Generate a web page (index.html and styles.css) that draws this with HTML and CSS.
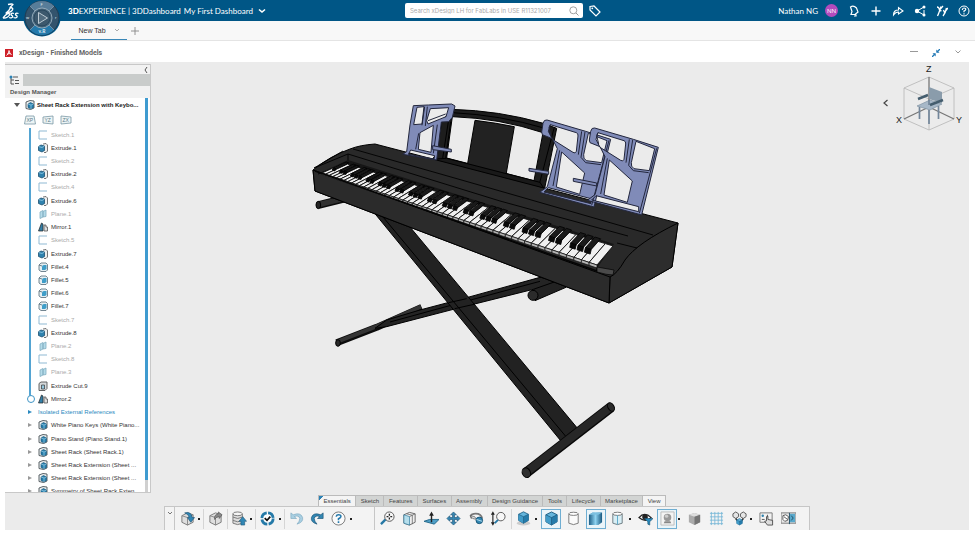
FILE: index.html
```html
<!DOCTYPE html>
<html lang="en">
<head>
<meta charset="utf-8">
<title>xDesign - Finished Models</title>
<link rel="stylesheet" href="styles.css">
</head>
<body>
<svg class="defs" aria-hidden="true">
  <defs>
    <linearGradient id="shade" x1="0" y1="0" x2="1" y2="0"><stop offset="0" stop-color="#1d5e86"/><stop offset=".5" stop-color="#8ed2f0"/><stop offset="1" stop-color="#17577e"/></linearGradient>
    <symbol id="sketch" viewBox="0 0 10 10"><path d="M9 1H1v8h8" fill="none" stroke="#8fb9d3"/></symbol>
    <symbol id="extrude" viewBox="0 0 10 10"><path d="M5 1l3-.5L9.500 2v6L8 9.500H6" fill="#eee" stroke="#555" stroke-width=".8"/><path d="M.5 3.500L3 2l3.500 1v4.500L4 9 .5 7.500z" fill="#2f82ae" stroke="#1c4f70" stroke-width=".8"/><path d="M.5 3.500L4 4.500 6.500 3" fill="none" stroke="#a5d6ed" stroke-width=".7"/></symbol>
    <symbol id="plane" viewBox="0 0 10 10"><path d="M2 3l3-1.500V8L2 9.500zM5 2.500L8 1v6.500L5 8z" fill="#b4dbe9" stroke="#83aec2" stroke-width=".8"/></symbol>
    <symbol id="mirror" viewBox="0 0 10 10"><path d="M3.500 1L5 2v7H.5z" fill="#347fa7" stroke="#222" stroke-width=".7"/><path d="M6 3h2v2h1.500v4H6z" fill="#ddd" stroke="#555" stroke-width=".8"/></symbol>
    <symbol id="fillet" viewBox="0 0 10 10"><path d="M1 3l2-2h5l1.500 1.500V8L8 9.500H3L1 8z" fill="#e5eef2" stroke="#536a77" stroke-width=".8"/><path d="M4 8V5q0-2 2-2h2.500v4L7 8z" fill="#3f9dc8"/><path d="M1 3l3 1" stroke="#536a77" stroke-width=".8"/></symbol>
    <symbol id="cut" viewBox="0 0 10 10"><path d="M1 2.500L3 1h6v6.500L7 9.500H1z" fill="#d5d9db" stroke="#555" stroke-width=".9"/><path d="M3.500 4h3v4h-3z" fill="#94c8df" stroke="#333" stroke-width=".7"/></symbol>
    <symbol id="part" viewBox="0 0 10 10"><path d="M1 2l4-1.500L9 1v7L5.500 9.500 1 8.500z" fill="#e9eef0" stroke="#4b5358" stroke-width=".9"/><path d="M3 4l2.500-1.500L8.500 4v3.500L6 9 3 7.500z" fill="#267eac" stroke="#174f70" stroke-width=".6"/><path d="M3 4l3 1v4m0-4l2.500-1" fill="none" stroke="#b0dcf0" stroke-width=".6"/></symbol>
    <symbol id="cube" viewBox="0 0 16 16"><path d="M2 4l6-3 6 3v7.500L8 15l-6-3.500z" fill="#64b5dc" stroke="#1c5b80"/><path d="M2 4l6 3v8l-6-3.500z" fill="#409bc8"/><path d="M8 7l6-3v7.500L8 15z" fill="#257baa"/><path d="M2 4l6 3 6-3M8 7v8" fill="none" stroke="#1c5b80" stroke-width=".8"/></symbol>
    <symbol id="graycube" viewBox="0 0 16 16"><path d="M2 5l6-3 6 2v8l-6 3-6-3z" fill="#dedede" stroke="#777"/><path d="M2 5l6 2 6-3M8 7v8" fill="none" stroke="#888"/></symbol>
  </defs>
</svg>

<header class="topbar">
  <a class="brand" href="#" aria-label="3DS home">
    <svg viewBox="0 0 18 18"><path d="M6 2.500Q10 1.500 11 2.500L8 5.500C13 5.500 11 10 4 11C7 9 8 7 8.500 5.500M1 16C4 12 7 10.500 7.500 12C8 14 4 16.500 1 16M12 11.500C9 10.500 8 12.500 10 13.500C12 15 9 16.500 7 15.500M16.500 11.500C13.500 10.500 12.500 12.500 14.500 13.500C16.500 15 13.500 16.500 11.500 15.500" fill="none" stroke="#fff" stroke-width="1.300" stroke-linejoin="round"/></svg>
  </a>
  <h1 class="title"><b>3D</b>EXPERIENCE | 3DDashboard</h1>
  <button class="dash" type="button">My First Dashboard
    <svg viewBox="0 0 8 6"><path d="M1 1.500l3 2.500 3-2.500" fill="none" stroke="#fff" stroke-width="1.600"/></svg>
  </button>
  <form class="search">
    <input type="text" aria-label="Search" placeholder="Search xDesign LH for FabLabs in USE R11321007">
    <button type="button" aria-label="Run search"><svg viewBox="0 0 10 10"><circle cx="4.300" cy="4.300" r="3.500" fill="none" stroke="#999" stroke-width=".9"/><path d="M7 7l2.500 2.500" stroke="#999"/></svg></button>
  </form>
  <button class="ico tag" type="button" aria-label="Tags"><svg viewBox="0 0 12 12"><path d="M1 1.500L5 1l6 6-4 4-6-6z" fill="none" stroke="#fff" stroke-width="1.200"/><circle cx="3.300" cy="3.300" r=".9" fill="#fff"/></svg></button>
  <nav class="tools" aria-label="User tools">
    <span class="user">Nathan NG</span>
    <button class="avatar" type="button">NN</button>
    <button class="ico" type="button" aria-label="Notifications"><svg viewBox="0 0 12 12"><path d="M2.500 2q3-2 6 1l1.500 4-3 2.500H3L4 6.500zM8 9.500v1.500H6" fill="none" stroke="#fff" stroke-width="1.200"/></svg></button>
    <button class="ico" type="button" aria-label="Add"><svg viewBox="0 0 12 12"><path d="M6 1.500v9M1.500 6h9" stroke="#fff" stroke-width="1.400"/></svg></button>
    <button class="ico" type="button" aria-label="Share"><svg viewBox="0 0 12 12"><path d="M1.500 10q0-5 5-5V2.500L11 6 6.500 9V7q-3 0-5 3z" fill="none" stroke="#fff" stroke-width="1.100"/></svg></button>
    <button class="ico" type="button" aria-label="Network"><svg viewBox="0 0 12 12"><path d="M10 2L3 6l7 4V5" fill="none" stroke="#fff"/><circle cx="10" cy="2" r="1.500" fill="#fff"/><circle cx="3" cy="6" r="2.200" fill="#fff"/><circle cx="10" cy="10" r="1.500" fill="#fff"/></svg></button>
    <button class="ico" type="button" aria-label="Communities"><svg viewBox="0 0 12 12"><path d="M1 2q2 0 2.500 3L7 1M5 1.500Q3 8 1.500 11M3.500 5l2 1M7.500 5l1 2.500L12 3M10.500 3q-1 5-3.500 8" fill="none" stroke="#fff" stroke-width="1.300"/></svg></button>
    <button class="ico" type="button" aria-label="Help"><svg viewBox="0 0 12 12"><circle cx="6" cy="6" r="5" fill="none" stroke="#fff"/><path d="M4.300 5Q4.500 3 6 3q2 0 1.700 1.600Q7.500 5.300 6 6v1.300M6 8.300v1.200" fill="none" stroke="#fff" stroke-width="1.200"/></svg></button>
  </nav>
  <button class="compass" type="button" aria-label="Compass">
    <svg viewBox="0 0 38 38"><circle cx="19" cy="19" r="18.500" fill="#005686"/><circle cx="19" cy="19" r="17" fill="#33546d" stroke="#203b50"/><path d="M19 19L7 7A17 17 0 0 1 31 7z" fill="#587d99"/><path d="M19 19L7 31A17 17 0 0 0 31 31z" fill="#2479ab"/><path d="M7 7l24 24M31 7L7 31" stroke="#8ba4b5" stroke-width=".7"/><circle cx="19" cy="19" r="10" fill="#46647a" stroke="#9ab0be" stroke-width=".9"/><circle cx="19" cy="19" r="8" fill="#3c586d" stroke="#29485e"/><path d="M15.500 13.500l9 5.500-9 5.500z" fill="#536d80" stroke="#c8d5dc" stroke-width=".9"/><g fill="#dce8ef"><text x="17.500" y="7" font-size="4">F</text><text x="3" y="20" font-size="4">w</text><text x="32" y="20" font-size="4">r</text><text x="15.500" y="34" font-size="5" font-weight="700">v.R</text></g></svg>
  </button>
</header>

<nav class="tabbar" aria-label="Dashboard tabs">
  <button class="tab" type="button">New Tab <svg viewBox="0 0 6 4"><path d="M1 1l2 2 2-2" fill="none" stroke="#999" stroke-width=".8"/></svg></button>
  <button class="addtab" type="button" aria-label="Add tab"><svg viewBox="0 0 8 8"><path d="M4 0v8M0 4h8" stroke="#888" stroke-width=".9"/></svg></button>
</nav>

<section class="widget">
  <header class="widgethead">
    <svg class="app" viewBox="0 0 8 8"><path d="M0 0h8v8H0z" fill="#ce2029"/><path d="M1.500 6.500Q4 5 4 1.500Q4.500 4.500 6.500 6M2 5l3.500-.5" fill="none" stroke="#fff" stroke-width=".9"/></svg>
    <h2>xDesign - Finished Models</h2>
    <button type="button" aria-label="Minimize"><svg viewBox="0 0 8 8"><path d="M0 2.500h8" stroke="#999"/></svg></button>
    <button type="button" aria-label="Restore"><svg viewBox="0 0 8 8"><path d="M8 0L5 3M0 8l3-3" stroke="#2379b5" stroke-width="1.300"/><path d="M4.300.5v3.200h3.200zM.5 4.300h3.200v3.200z" fill="#2379b5"/></svg></button>
    <button type="button" aria-label="Widget menu"><svg viewBox="0 0 8 8"><path d="M1.500 1.500L4 4l2.500-2.500" fill="none" stroke="#999"/></svg></button>
  </header>

  <main class="stage">
    <svg class="scene" viewBox="5 62 964 468" role="img" aria-label="Digital piano on a folding stand">
      <g transform="translate(320 200) scale(.33333)" stroke="#000" stroke-width="3" stroke-linejoin="round">
        <path d="M50 428L170 382L305 322" fill="none" stroke="#0c0c0c" stroke-width="21"/>
        <path d="M50 426L168 380L303 320" fill="none" stroke="#343434" stroke-width="12"/>
        <ellipse cx="54" cy="429" rx="7" ry="10" fill="#2a2a2a"/>
        <path d="M640 269L690 232L750 250L738 262L645 302z" fill="#222"/>
        <circle cx="639" cy="286" r="15" fill="#2b2b2b"/>
        <path d="M165 385L200 360L300 330L440 293L660 232L720 240L640 268L400 328L200 380z" fill="#242424"/>
        <path d="M210 366L400 314L660 244" fill="none"/>
        <path d="M160 35L265 75L770 682L722 722z" fill="#222"/>
        <path d="M180 40L738 710" fill="none"/>
        <path d="M386 308L440 296M404 326L462 313" fill="none"/>
        <path d="M620 817L872 622" stroke="#080808" stroke-width="31"/>
        <path d="M620 816L872 621" stroke="#272727" stroke-width="24"/>
        <ellipse cx="619" cy="818" rx="12" ry="15" transform="rotate(-25 619 818)" fill="#2f2f2f"/>
        <ellipse cx="873" cy="621" rx="9" ry="14" transform="rotate(-30 873 621)" fill="#2a2a2a"/>
      </g>
      <g transform="translate(300 90) scale(.33333)" stroke="#000" stroke-width="3" stroke-linejoin="round">
        <path d="M56 345L150 322" stroke="#0c0c0c" stroke-width="23"/><path d="M56 344L150 321" stroke="#303030" stroke-width="16"/>
        <ellipse cx="55" cy="345" rx="7" ry="11" fill="#242424"/>
        <path d="M455 58Q600 62 730 100L770 115L733 300L390 218L410 190L425 95z M457 80L440 204L702 272L729 128Q600 85 457 80z" fill="#1d1d1d" fill-rule="evenodd"/>
        <path d="M458 68Q600 75 735 115M445 95L428 205M452 95L437 205M762 115L716 290" fill="none"/>
        <path d="M525 91Q590 99 643 110L618 255L502 226z" fill="#222"/>
        <path d="M390 208L440 205L720 277L735 300L700 292z" fill="#191919"/>
      </g>
      <g stroke="#000" stroke-linejoin="round">
        <path d="M313 170Q330 156 350 149Q360 145 375 144L678 223L672 267L609 303L315 191z" fill="#292929"/>
        <path d="M610 277Q617 274 625 260Q637 243 678 223L672 267L609 303z" fill="#2d2d2d"/>
        <path d="M313 170L610 277L609 303L315 191z" fill="#2b2b2b"/>
        <path d="M353 149L500 191L653 235M348 154L500 201L628 236M314 168L348 154V163L318 174M617 243L637 248M343 151L314 168M596 269L613 273" fill="none" stroke-width=".9"/>
        <path d="M320 173L348 160L614 244L597 268z" fill="#161616" stroke="none"/>
      </g>
      <g id="keys"></g>
      <path d="M315 171L597 271" stroke="#050505" stroke-width="1.500"/>
      <path d="M597 267L614 270L613 275Q607 275 597 272z" fill="#4a4a4a" stroke="#000" stroke-width=".7"/>
      <g transform="translate(300 90) scale(.33333)" fill="#808bb8" stroke="#22263c" stroke-width="3" stroke-linejoin="round" fill-rule="evenodd">
        <path d="M340 47L385 45L455 42L465 48L457 82L446 95L424 96L410 210L308 193L320 185L330 105z M351 52L372 50L366 102L341 104z M391 56L446 53L438 80L384 102L380 92z M360 128L400 106L393 187L355 178z M332 180L404 197L402 207L325 193z"/>
        <path d="M374 50L366 106M382 50L376 108M412 104L400 190M356 130L347 178M384 92L437 72" fill="none"/>
        <path d="M398 167L454 178V186L398 179z"/>
      </g>
      <g transform="translate(500 100) scale(.33333)" fill="#808bb8" stroke="#22263c" stroke-width="3" stroke-linejoin="round" fill-rule="evenodd">
        <defs><g id="rack">
          <path d="M268 120L272 94Q275 82 284 84L400 118L475 142L425 345L262 301L285 284L315 170L300 140L270 128z M294 98L372 122Q378 124 377 132L372 178Q369 186 362 181L300 142L288 118z M408 124L464 146L448 212L402 206Q392 200 394 188z M328 180L397 243L382 307L312 285z M288 287L416 320V335L275 300z"/>
          <path d="M388 118L378 188M398 120L386 196L400 212L446 218M322 175L302 282M470 145L418 340M294 98L290 106L296 132" fill="none"/>
        </g></defs>
        <use href="#rack" transform="translate(-143 -24)"/>
        <use href="#rack"/>
        <path d="M87 205L146 214V223L87 213zM220 235L290 249V258L220 244z"/>
      </g>
    </svg>

    <aside class="panel">
      <button class="fold" type="button" aria-label="Collapse panel"><svg viewBox="0 0 4 8"><path d="M3 1L1 4l2 3" fill="none" stroke="#444" stroke-width=".9"/></svg></button>
      <div class="paneltabs"><button type="button" aria-label="Tree"><svg viewBox="0 0 10 10"><path d="M1 2h2M2 3v6h3M2 5h3M4 2h5M6 5.500h4M6 8.500h4" fill="none" stroke="#555"/><circle cx="2" cy="2" r="1.500" fill="#2b82b5"/></svg></button></div>
      <h3>Design Manager</h3>
      <div class="tree">
        <div class="root"><i class="down"></i><svg><use href="#part"/></svg><b>Sheet Rack Extension with Keybo...</b></div>
        <div class="planes">
          <svg viewBox="0 0 12 10"><path d="M2 1h8l1.500 8H.5z" fill="#edf4f5" stroke="#7a98a5" stroke-width=".8"/><text x="2.500" y="7">XP</text></svg>
          <svg viewBox="0 0 12 10"><path d="M1 2l10-1v8L1 8z" fill="#edf4f5" stroke="#7a98a5" stroke-width=".8"/><text x="2.500" y="7">YZ</text></svg>
          <svg viewBox="0 0 12 10"><path d="M1 1l10 1v6L1 9z" fill="#edf4f5" stroke="#7a98a5" stroke-width=".8"/><text x="2.500" y="7">ZX</text></svg>
        </div>
        <ul class="nodes">
          <li class="dim"><svg><use href="#sketch"/></svg>Sketch.1</li>
          <li><svg><use href="#extrude"/></svg>Extrude.1</li>
          <li class="dim"><svg><use href="#sketch"/></svg>Sketch.2</li>
          <li><svg><use href="#extrude"/></svg>Extrude.2</li>
          <li class="dim"><svg><use href="#sketch"/></svg>Sketch.4</li>
          <li><svg><use href="#extrude"/></svg>Extrude.6</li>
          <li class="dim"><svg><use href="#plane"/></svg>Plane.1</li>
          <li><svg><use href="#mirror"/></svg>Mirror.1</li>
          <li class="dim"><svg><use href="#sketch"/></svg>Sketch.5</li>
          <li><svg><use href="#extrude"/></svg>Extrude.7</li>
          <li><svg><use href="#fillet"/></svg>Fillet.4</li>
          <li><svg><use href="#fillet"/></svg>Fillet.5</li>
          <li><svg><use href="#fillet"/></svg>Fillet.6</li>
          <li><svg><use href="#fillet"/></svg>Fillet.7</li>
          <li class="dim"><svg><use href="#sketch"/></svg>Sketch.7</li>
          <li><svg><use href="#extrude"/></svg>Extrude.8</li>
          <li class="dim"><svg><use href="#plane"/></svg>Plane.2</li>
          <li class="dim"><svg><use href="#sketch"/></svg>Sketch.8</li>
          <li class="dim"><svg><use href="#plane"/></svg>Plane.3</li>
          <li><svg><use href="#cut"/></svg>Extrude Cut.9</li>
          <li class="end"><svg><use href="#mirror"/></svg>Mirror.2</li>
          <li class="ext"><i class="right"></i>Isolated External References</li>
          <li class="sub"><i class="right"></i><svg><use href="#part"/></svg>White Piano Keys (White Piano...</li>
          <li class="sub"><i class="right"></i><svg><use href="#part"/></svg>Piano Stand (Piano Stand.1)</li>
          <li class="sub"><i class="right"></i><svg><use href="#part"/></svg>Sheet Rack (Sheet Rack.1)</li>
          <li class="sub"><i class="right"></i><svg><use href="#part"/></svg>Sheet Rack Extension (Sheet ...</li>
          <li class="sub"><i class="right"></i><svg><use href="#part"/></svg>Sheet Rack Extension (Sheet ...</li>
          <li class="sub"><i class="right"></i><svg><use href="#part"/></svg>Symmetry of Sheet Rack Exten...</li>
        </ul>
      </div>
    </aside>

    <div class="viewcube">
      <button type="button" aria-label="Previous view"><svg viewBox="0 0 5 8"><path d="M4.500 1L1 4l3.500 3" fill="none" stroke="#444" stroke-width="1.200"/></svg></button>
      <svg class="cube" viewBox="895 62 70 72" role="img" aria-label="View orientation">
        <path d="M929 77L954 88V119L929 130L904 119V88zM904 88L929 99L954 88M929 99V130" fill="none" stroke="#b5b5b5" stroke-width=".8"/>
        <path d="M929 77V108M929 107L904 119M929 107L954 119" stroke="#777" stroke-width="1.300"/>
        <path d="M929 87l13 5v11l-13-4z" fill="#8a9cab"/><path d="M917 106l13-6 12 4-12 6z" fill="#a7b8c8" stroke="#76899a" stroke-width=".6"/>
        <path d="M919.500 107v12M929 110v14M938.500 106v13M929 100v5" stroke="#73869a" stroke-width="1.700"/>
        <path d="M918 99l10-4M930 105l13-5" stroke="#445d6e" stroke-width="2.500"/>
        <g font-size="9" fill="#222"><text x="926" y="72">Z</text><text x="896" y="123">X</text><text x="956" y="123">Y</text></g>
      </svg>
    </div>

    <div class="actionbar">
      <div class="bartabs">
        <button class="on first" type="button">Essentials</button><button type="button">Sketch</button><button type="button">Features</button><button type="button">Surfaces</button><button type="button">Assembly</button><button type="button">Design Guidance</button><button type="button">Tools</button><button type="button">Lifecycle</button><button type="button">Marketplace</button><button class="on" type="button">View</button>
      </div>
      <div class="bar">
        <button class="grip" type="button" aria-label="Bar options"><svg viewBox="0 0 6 4"><path d="M1 1l2 2 2-2" fill="none" stroke="#555" stroke-width=".8"/></svg></button>
        <div class="group left">
          <button class="menu" type="button" aria-label="Import"><svg viewBox="0 0 16 16"><use href="#graycube"/><path d="M5 2q7-2 8 5h2.500l-4 5-3.500-5h2q-1-4-5-5z" fill="#3187b5" stroke="#1b5375" stroke-width=".7"/></svg></button><hr>
          <button type="button" aria-label="Export"><svg viewBox="0 0 16 16"><use href="#graycube"/><path d="M7 9q-1-5 4-6V1l4 3-3 4V6q-3 0-5 3z" fill="#888" stroke="#555" stroke-width=".7"/></svg></button><hr>
          <button class="menu" type="button" aria-label="Save"><svg viewBox="0 0 16 16"><path d="M1 3v10q5 3 10 0V3" fill="#ddd" stroke="#777"/><ellipse cx="6" cy="3" rx="5" ry="2" fill="#f5f5f5" stroke="#777"/><path d="M1 6.500q5 3 10 0M1 10q5 3 10 0" fill="none" stroke="#777"/><path d="M9.500 15V11H7.500L11.500 6l4 5h-2v4z" fill="#3187b5" stroke="#1b5375" stroke-width=".6"/></svg></button><hr>
          <button class="menu" type="button" aria-label="Update"><svg viewBox="0 0 16 16"><circle cx="8" cy="8" r="6" fill="#fff" stroke="#257aa8" stroke-width="3" stroke-dasharray="7.900 1.500"/><path d="M5 7.500L7.500 10 11 6" fill="none" stroke="#111" stroke-width="1.800"/></svg></button><hr>
          <button type="button" aria-label="Undo"><svg viewBox="0 0 16 16"><path d="M2 2v6h6L5.500 6q5-2 6 2 0 3-3 6 7-2 6-7-2-6-10-3z" fill="#a9cfe2" stroke="#7faac0" stroke-width=".7"/></svg></button>
          <button type="button" aria-label="Redo"><svg viewBox="0 0 16 16"><path d="M14 2v6H8l2.500-2q-5-2-6 2 0 3 3 6-7-2-6-7 2-6 10-3z" fill="#3287b3" stroke="#1b5375" stroke-width=".7"/></svg></button>
          <button class="menu" type="button" aria-label="Help"><svg viewBox="0 0 16 16"><circle cx="8" cy="8" r="7" fill="#fafafa" stroke="#777"/><path d="M5.500 6Q6 4 8 4q3 0 2.500 2.200Q10 7.500 8 8.300v1.500M8 11v1.700" fill="none" stroke="#2379ad" stroke-width="1.700"/></svg></button>
        </div>
        <div class="group wide">
          <button type="button" aria-label="Zoom fit"><svg viewBox="0 0 16 16"><path d="M1 14l5-5" stroke="#2678a5" stroke-width="2.500"/><circle cx="10" cy="6" r="5" fill="#f7f7f7" stroke="#555"/><path d="M10 3v6M7 6h6" stroke="#222" stroke-width="1.400" stroke-dasharray="2 2"/></svg></button>
          <button type="button" aria-label="Orientation"><svg viewBox="0 0 16 16"><path d="M2 4l6-2.500L14 3v9l-6 3-6-2z" fill="#eee" stroke="#666"/><path d="M2 4l6 2v9l-6-2z" fill="#b5deec" stroke="#27799f" stroke-width=".7"/><path d="M8 6l6-3M5 3l6 1.500V14" fill="none" stroke="#666" stroke-width=".8"/></svg></button>
          <button type="button" aria-label="Normal view"><svg viewBox="0 0 16 16"><path d="M0 11l6-2h10l-5 5z" fill="#4e9fc7" stroke="#236789"/><path d="M8 12V4" stroke="#222" stroke-width="1.500"/><path d="M5.500 5L8 .5l2.500 4.500z" fill="#222"/></svg></button>
          <button type="button" aria-label="Pan"><svg viewBox="0 0 16 16"><path d="M8 1l3 3H9v3h3V5l3 3-3 3V9H9v3h2l-3 3-3-3h2V9H4v2L1 8l3-3v2h3V4H5z" fill="#3788b4" stroke="#1b5375" stroke-width=".7"/></svg></button>
          <button type="button" aria-label="Rotate"><svg viewBox="0 0 16 16"><path d="M3 8Q0 4 5 3q8-1 9 5" fill="none" stroke="#777" stroke-width="2"/><path d="M1 5l5 1 2 3-4-1z" fill="#ddd" stroke="#555" stroke-width=".7"/><circle cx="11" cy="10" r="3.500" fill="#3388b3" stroke="#195475"/><path d="M8 9l6 2" stroke="#bce1f0"/></svg></button>
          <button type="button" aria-label="Zoom"><svg viewBox="0 0 16 16"><path d="M2 2v12M.5 4L2 1.500 3.500 4M.5 12L2 14.500 3.500 12" fill="none" stroke="#222" stroke-width="1.200"/><circle cx="10.500" cy="6" r="4.500" fill="#f7f7f7" stroke="#555"/><path d="M4 13l3.500-3.500" stroke="#2678a5" stroke-width="2"/></svg></button><hr>
          <button class="menu" type="button" aria-label="Ambience"><svg viewBox="0 0 16 16"><ellipse cx="8" cy="13" rx="7" ry="2.500" fill="#ccc"/><use href="#cube" x="1" width="14" height="14"/></svg></button>
          <button class="sel" type="button" aria-label="Shading with edges"><svg viewBox="0 0 16 16"><use href="#cube"/></svg></button>
          <button type="button" aria-label="Cylinder"><svg viewBox="0 0 16 16"><path d="M3 3v10q5 3 10 0V3" fill="#fafafa" stroke="#777"/><ellipse cx="8" cy="3" rx="5" ry="1.700" fill="#fff" stroke="#777"/></svg></button>
          <button class="sel" type="button" aria-label="Shading"><svg viewBox="0 0 16 16"><path d="M1 4l4-2.500h10V12l-4 3H1z" fill="url(#shade)"/><path d="M1 4l4-2.500h10L11 4z" fill="#7cc0e0"/></svg></button>
          <button class="menu" type="button" aria-label="Section"><svg viewBox="0 0 16 16"><path d="M3 3v10q5 3 10 0V3" fill="#d8eef5" stroke="#6c7a80"/><ellipse cx="8" cy="3" rx="5" ry="1.700" fill="#fff" stroke="#777"/><path d="M8 4.500v10" stroke="#5aa8c8"/></svg></button>
          <button type="button" aria-label="Visibility filter"><svg viewBox="0 0 16 16"><path d="M1 7q6-7 13 0-6 6-13 0z" fill="#fff" stroke="#222" stroke-width="1.300"/><circle cx="7.500" cy="6.500" r="3" fill="#222"/><path d="M7 8h9l-3.500 3.500V15l-2-1v-2.500z" fill="#278abd" stroke="#195475" stroke-width=".7"/></svg></button>
          <button class="sel menu" type="button" aria-label="Scene"><svg viewBox="0 0 16 16"><path d="M1 1h14v14H1z" fill="#f4f4f4" stroke="#bbb"/><circle cx="8" cy="7" r="4" fill="#999"/><circle cx="7" cy="5.500" r="1.800" fill="#ccc"/><path d="M5 11h6l1 2H4z" fill="#888"/></svg></button>
          <button type="button" aria-label="Solid"><svg viewBox="0 0 16 16"><path d="M2 4l6-2 6 2v8l-6 3-6-3z" fill="#aaa"/><path d="M2 4l6-2 6 2-6 2z" fill="#ddd"/><path d="M8 6l6-2v8l-6 3z" fill="#747474"/></svg></button>
          <button type="button" aria-label="Grid"><svg viewBox="0 0 16 16"><path d="M2.500 1v14M6.200 1v14M9.800 1v14M13.500 1v14M1 2.500h14M1 6.200h14M1 9.800h14M1 13.500h14" stroke="#75b7d7" stroke-width=".9"/></svg></button>
          <button class="menu" type="button" aria-label="Explode"><svg viewBox="0 0 16 16"><path d="M1 3l3-2 3 2v3L4 8 1 6zM9 3l3-2 3 2v3l-3 2-3-2z" fill="#e5e5e5" stroke="#555"/><path d="M4 8l2 3M12 8l-2 3" stroke="#333" stroke-width="1.500"/><use href="#cube" x="4" y="7" width="8" height="9"/></svg></button>
          <button type="button" aria-label="Touch selection"><svg viewBox="0 0 16 16"><path d="M1 2h13v10H1z" fill="#f2f2f2" stroke="#777"/><circle cx="4" cy="5" r="1.300" fill="#2d82ad"/><path d="M3 9h3M9 4v4" stroke="#555"/><path d="M9 15l-3-4 2-.5V6l1.500-.5V9l5 1v5z" fill="#ddd" stroke="#444" stroke-width=".9"/></svg></button>
          <button type="button" aria-label="Compare"><svg viewBox="0 0 16 16"><path d="M0 2h16v11H0z" fill="#e7e7e7" stroke="#777"/><path d="M9 3h6v9H9z" fill="#59a9cc"/><path d="M2 5l3-1 3 2-1 4-3 1-2-2zM3 6l4 3" fill="#fff" stroke="#555"/><path d="M9 2v12M11 5l2 2.500-2 2.500" fill="none" stroke="#234f65"/></svg></button>
        </div>
      </div>
    </div>
  </main>
</section>
<script src="keys.js"></script>
</body>
</html>
```
FILE: styles.css
```css
* { box-sizing: border-box; }
body { margin: 0; height: 100vh; display: flex; flex-direction: column; background: #fff; color: #333; font-family: "Liberation Sans", Arial, sans-serif; font-size: 6px; overflow: hidden; }
button { margin: 0; padding: 0; border: 0; background: none; color: inherit; font: inherit; display: flex; align-items: center; justify-content: center; }
svg { display: block; flex: none; }
h1, h2, h3, ul, form { margin: 0; padding: 0; }
.defs { position: absolute; width: 0; height: 0; }

.topbar { position: relative; z-index: 2; flex: none; height: 21px; display: flex; align-items: center; background: #005686; color: #fff; font-family: Lato, "Liberation Sans", sans-serif; font-size: 8px; }
.brand { width: 68px; padding-left: 2px; }
.brand svg { width: 18px; height: 18px; }
.title { font-size: 8px; font-weight: 400; white-space: nowrap; }
.title b { font-weight: 900; }
.dash { margin-left: 3px; gap: 5px; white-space: nowrap; }
.dash svg { width: 8px; height: 6px; }
.search { flex: none; width: 178px; height: 15px; margin-left: auto; display: flex; background: #fff; border-radius: 2px; }
.search input { flex: 1; min-width: 0; border: 0; padding: 0 0 0 5px; background: none; outline: 0; font: 6px Inter, "Liberation Sans", sans-serif; color: #444; }
.search input::placeholder { color: #aaa; opacity: 1; }
.search button { width: 18px; }
.search svg { width: 10px; height: 10px; }
.ico svg { width: 12px; height: 12px; }
.tag { margin-left: 6px; }
.tools { width: 374px; padding-right: 5px; display: flex; align-items: center; justify-content: flex-end; gap: 10px; }
.user { margin-right: -3px; }
.avatar { width: 13px; height: 13px; border-radius: 50%; background: #b34bbd; font-size: 6px; }
.compass { position: absolute; left: 23px; top: -1px; }
.compass svg { width: 38px; height: 38px; }

.tabbar { flex: none; height: 20px; padding-left: 71px; display: flex; align-items: center; background: #f8f8f8; border-bottom: 1px solid #e4e4e4; }
.tab { align-self: stretch; width: 56px; gap: 8px; border-bottom: 1px solid #3a87b7; font-size: 7px; }
.tab svg { width: 6px; height: 4px; }
.addtab { margin-left: 4px; }
.addtab svg { width: 8px; height: 8px; }

.widget { flex: 1; min-height: 0; display: flex; flex-direction: column; }
.widgethead { flex: none; height: 21px; padding: 2px 13px 0 5px; display: flex; align-items: center; gap: 14px; }
.widgethead h2 { flex: 1; margin-left: -8px; font: 700 7px Roboto, sans-serif; color: #666; }
.widgethead svg { width: 8px; height: 8px; }
.stage { flex: 1; min-height: 0; margin: 0 6px 3px 5px; display: grid; grid-template: minmax(0, 1fr) auto / 146px 1fr; background: #ebebeb; }
.scene { grid-area: 1 / 1 / 3 / 3; width: 100%; height: 100%; min-height: 0; }

.panel { grid-area: 1 / 1; z-index: 1; margin-top: 2px; display: flex; flex-direction: column; background: #fff; border: solid #c8c8c8; border-width: 1px 1px 1px 0; overflow: hidden; }
.fold { height: 9px; flex: none; justify-content: flex-end; padding-right: 2px; background: #f2f2f2; }
.fold svg { width: 4px; height: 8px; }
.paneltabs { flex: none; height: 12px; background: #c9cccb; }
.paneltabs button { width: 18px; height: 12px; background: #f2f2f2; }
.paneltabs svg { width: 10px; height: 10px; }
.panel h3 { flex: none; height: 12px; padding-left: 5px; background: #f2f2f2; color: #555; font-size: 6px; line-height: 12px; }
.tree { flex: 1; min-height: 0; margin-right: 2px; overflow: hidden; background: linear-gradient(#3f9bd0 97%, #d0d0d0 97%) 100% 0 / 3px 100% no-repeat; }
.root { height: 14px; display: flex; align-items: center; gap: 2px; padding-left: 9px; white-space: nowrap; color: #222; }
.root svg, .nodes svg { width: 10px; height: 10px; }
.root svg { margin-left: 3px; }
.planes { height: 16px; display: flex; align-items: center; gap: 6px; padding-left: 19px; }
.planes svg { width: 12px; height: 10px; }
.planes text { font-size: 5px; fill: #5b7c8c; }
.nodes { height: 370px; display: grid; grid-auto-rows: 1fr; list-style: none; background: linear-gradient(#54a4d2, #54a4d2) 24px 0 / 2px 271px no-repeat; }
.nodes li { position: relative; min-height: 0; display: flex; align-items: center; gap: 3px; padding-left: 33px; white-space: nowrap; }
.nodes .dim { color: #aaa; }
.nodes .end::before { content: ""; position: absolute; left: 22px; width: 6px; height: 6px; border: 1px solid #3f95c6; border-radius: 50%; background: #fff; }
.nodes .ext, .nodes .sub { padding-left: 23px; }
.nodes .ext { color: #2b8ac0; gap: 6px; }
.down { border: solid transparent; border-width: 4px 3px 0; border-top-color: #555; }
.right { border: solid transparent; border-width: 2px 0 2px 4px; border-left-color: #999; }
.sub .right { margin-right: 3px; }
.ext .right { border-left-color: #2b8ac0; }

.viewcube { grid-area: 1 / 2; place-self: start end; margin-right: 4px; display: flex; align-items: center; gap: 7px; }
.viewcube button { padding-top: 10px; }
.viewcube button svg { width: 5px; height: 8px; }
.cube { width: 70px; height: 72px; }

.actionbar { grid-area: 2 / 1 / 3 / 3; z-index: 1; justify-self: center; width: 67%; min-width: 646px; margin-top: 2px; display: flex; flex-direction: column; }
.bartabs { height: 11px; width: 348px; margin-left: 154px; display: flex; }
.bartabs button { flex: 1 1 auto; height: 11px; padding: 0 4px; background: #d2d4d3; border: 1px solid #bbb; border-left: 0; border-bottom: 0; color: #444; white-space: nowrap; }
.bartabs .on { background: #f4f4f4; }
.bartabs .first { border-left: 1px solid #bbb; background: linear-gradient(135deg, #2b82b5 3px, #f4f4f4 3px); }
.bar { height: 24px; display: flex; background: #f3f3f3; border: 1px solid #c6c6c6; border-bottom: 0; }
.grip { width: 9px; height: 12px; }
.grip svg { width: 6px; height: 4px; }
.group { display: flex; align-items: center; border-left: 1px solid #c6c6c6; }
.group hr { width: 1px; height: 20px; margin: 0; border: 0; background: #d5d5d5; }
.group button { position: relative; width: 20px; height: 20px; }
.group svg { width: 15px; height: 15px; }
.group .menu { margin-right: 5px; }
.group .menu::after { content: ""; position: absolute; right: -3px; top: 9px; width: 2px; height: 2px; background: #222; }
.group .sel { outline: 1px solid #6faed2; outline-offset: -1px; background: #eaf4f9; }
.left { width: 200px; padding: 0 20px 0 2px; justify-content: space-between; }
.wide { flex: 1; padding: 0 10px 0 2px; justify-content: space-between; }
```
FILE: keys.js
```js
// Draws the 52 white and 36 black keys along the keyboard in perspective.
(function () {
  var host = document.getElementById('keys');
  var ns = 'http://www.w3.org/2000/svg';
  var front = [[322, 173], [597, 265]];
  var back = [[344, 163], [613, 246]];
  function mix(a, b, t) { return [a[0] + (b[0] - a[0]) * t, a[1] + (b[1] - a[1]) * t]; }
  function at(n, depth) {
    var t = n / 52;
    t = t / (1 + 0.5 * (1 - t));
    return mix(mix(front[0], front[1], t), mix(back[0], back[1], t), depth);
  }
  function poly(points, fill, stroke, width) {
    var p = document.createElementNS(ns, 'polygon');
    p.setAttribute('points', points.map(function (q) { return q[0].toFixed(1) + ',' + q[1].toFixed(1); }).join(' '));
    p.setAttribute('fill', fill);
    p.setAttribute('stroke', stroke);
    p.setAttribute('stroke-width', width);
    host.appendChild(p);
  }
  function drop(p, d) { return [p[0], p[1] + d]; }
  var i, s;
  for (i = 0; i < 52; i++) {
    s = 0.5 + i / 52 * 0.5;
    poly([at(i, 0), at(i + 1, 0), at(i + 1, 1), at(i, 1)], '#f0f0f0', '#111', 0.9);
    poly([at(i, 0), at(i + 1, 0), drop(at(i + 1, 0), 3 * s), drop(at(i, 0), 3 * s)], '#b4b4b4', '#111', 0.7);
  }
  for (i = 1; i < 52; i++) {
    if (i % 7 === 2 || i % 7 === 5) { continue; }
    s = 1.5 + i / 52 * 2;
    poly([drop(at(i - 0.38, 0.42), -s), drop(at(i + 0.38, 0.42), -s), drop(at(i + 0.38, 1), -s), drop(at(i - 0.38, 1), -s)], '#1a1a1a', '#000', 0.8);
    poly([drop(at(i - 0.38, 0.42), -s), drop(at(i + 0.38, 0.42), -s), at(i + 0.38, 0.36), at(i - 0.38, 0.36)], '#0a0a0a', '#000', 0.8);
  }
}());
```
